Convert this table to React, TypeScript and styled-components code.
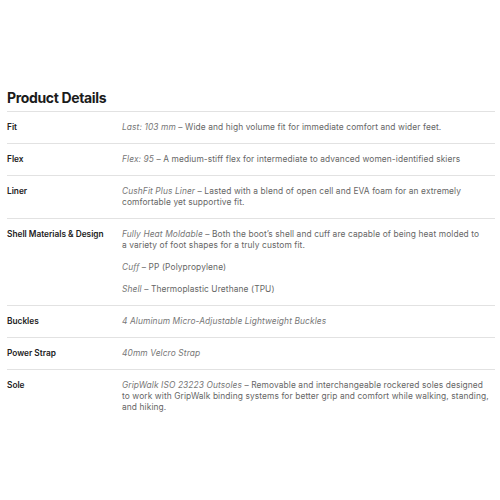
import React from "react";
import styled, { createGlobalStyle } from "styled-components";

const Global = createGlobalStyle`
  html, body { margin: 0; padding: 0; background: #ffffff; }
  body { font-family: "Inter", "Liberation Sans", sans-serif; }
`;

const Page = styled.div`
  width: 500px;
  height: 500px;
  box-sizing: border-box;
  padding: 90px 5px 0 7px;
`;

const Heading = styled.h2`
  margin: 0 0 5px 0;
  font-size: 14px;
  line-height: 16px;
  font-weight: 700;
  color: #1b1b1b;
  letter-spacing: -0.35px;
`;

const Table = styled.div`
  display: flex;
  flex-direction: column;
`;

const Row = styled.div`
  display: grid;
  grid-template-columns: 115px 1fr;
  padding: 10px 0;
  border-top: 1px solid #e2e2e2;
`;

const Label = styled.div`
  font-size: 8.3px;
  line-height: 11px;
  font-weight: 600;
  color: #222;
`;

const Value = styled.div`
  display: flex;
  flex-direction: column;
  gap: 11px;
`;

const Para = styled.p`
  margin: 0;
  font-size: 8.4px;
  line-height: 11px;
  letter-spacing: 0.1px;
  color: #666;
  white-space: pre-line;
`;

const Em = styled.em`
  font-style: italic;
  color: #777;
`;

type Item = { label: string; paras: { em: string; rest?: string }[] };

const items: Item[] = [
  { label: "Fit", paras: [{ em: "Last: 103 mm", rest: " – Wide and high volume fit for immediate comfort and wider feet." }] },
  { label: "Flex", paras: [{ em: "Flex: 95", rest: " – A medium-stiff flex for intermediate to advanced women-identified skiers" }] },
  { label: "Liner", paras: [{ em: "CushFit Plus Liner", rest: " – Lasted with a blend of open cell and EVA foam for an extremely\ncomfortable yet supportive fit." }] },
  {
    label: "Shell Materials & Design",
    paras: [
      { em: "Fully Heat Moldable", rest: " – Both the boot’s shell and cuff are capable of being heat molded to\na variety of foot shapes for a truly custom fit." },
      { em: "Cuff", rest: " – PP (Polypropylene)" },
      { em: "Shell", rest: " – Thermoplastic Urethane (TPU)" },
    ],
  },
  { label: "Buckles", paras: [{ em: "4 Aluminum Micro-Adjustable Lightweight Buckles" }] },
  { label: "Power Strap", paras: [{ em: "40mm Velcro Strap" }] },
  { label: "Sole", paras: [{ em: "GripWalk ISO 23223 Outsoles", rest: " – Removable and interchangeable rockered soles designed\nto work with GripWalk binding systems for better grip and comfort while walking, standing,\nand hiking." }] },
];

export default function App() {
  return (
    <>
      <Global />
      <Page>
        <Heading>Product Details</Heading>
        <Table>
          {items.map((it) => (
            <Row key={it.label}>
              <Label>{it.label}</Label>
              <Value>
                {it.paras.map((p, i) => (
                  <Para key={i}>
                    <Em>{p.em}</Em>
                    {p.rest}
                  </Para>
                ))}
              </Value>
            </Row>
          ))}
        </Table>
      </Page>
    </>
  );
}
